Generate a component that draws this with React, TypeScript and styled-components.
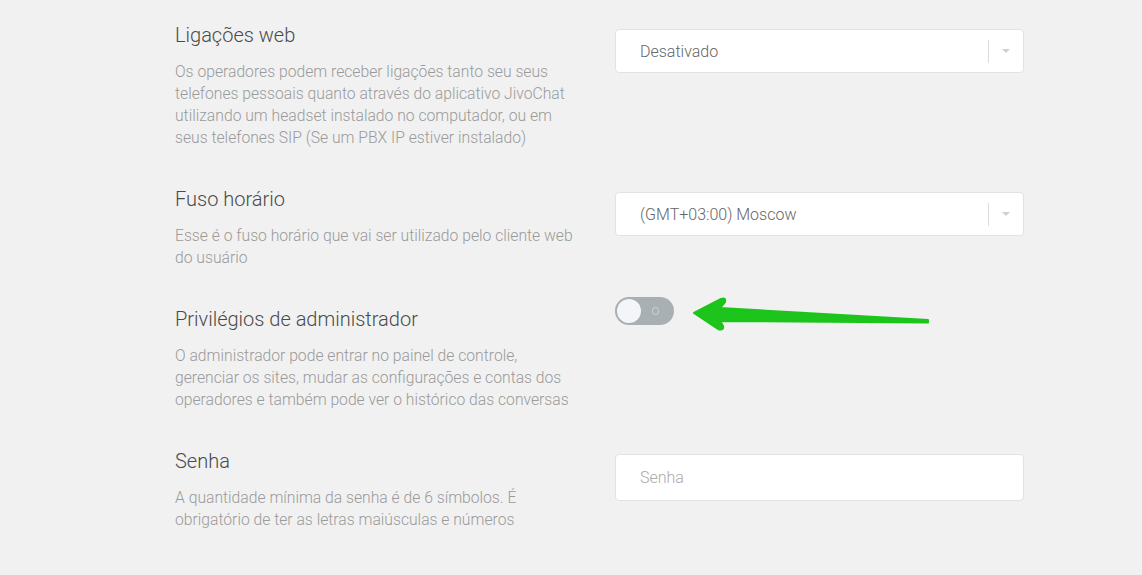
import styled, { createGlobalStyle } from 'styled-components';

const GlobalStyle = createGlobalStyle`
  html, body {
    margin: 0;
    padding: 0;
    background: #f1f1f1;
  }
  body {
    font-family: Roboto, 'Liberation Sans', sans-serif;
  }
`;

const Page = styled.div`
  display: flex;
  flex-direction: column;
  gap: 37px;
  padding: 22px 0 0 175px;
  height: 575px;
  box-sizing: border-box;
  overflow: hidden;
`;

const Row = styled.div`
  display: grid;
  grid-template-columns: 440px 409px;
  align-items: start;
`;

const Info = styled.div`
  display: flex;
  flex-direction: column;
  gap: 13px;
`;

const Title = styled.div`
  font-size: 20px;
  line-height: 26px;
  font-weight: 300;
  color: #4a4a4a;
`;

const Desc = styled.div`
  font-size: 15.7px;
  line-height: 22px;
  font-weight: 300;
  color: #9a9a9a;
  white-space: nowrap;
`;

const Control = styled.div<{ $offset: number }>`
  position: relative;
  margin-top: ${({ $offset }) => $offset}px;
`;

const Box = styled.div<{ $height: number }>`
  display: flex;
  align-items: center;
  height: ${({ $height }) => $height}px;
  box-sizing: border-box;
  padding-left: 24px;
  background: #fff;
  border: 1px solid #e2e2e2;
  border-radius: 4px;
  font-size: 16px;
  font-weight: 300;
`;

const Value = styled.span`
  flex: 1;
  color: #666;
`;

const Placeholder = styled.span`
  flex: 1;
  color: #aaa;
`;

const Separator = styled.span`
  width: 1px;
  height: 23px;
  background: #dcdcdc;
`;

const Caret = styled.span`
  width: 34px;
  display: flex;
  justify-content: center;

  &::after {
    content: '';
    border-left: 4px solid transparent;
    border-right: 4px solid transparent;
    border-top: 4px solid #cfcfcf;
  }
`;

const Toggle = styled.div`
  display: flex;
  align-items: center;
  width: 59px;
  height: 28px;
  box-sizing: border-box;
  padding: 0 2px;
  border-radius: 14px;
  background: #a9b0b3;
`;

const Knob = styled.span`
  width: 24px;
  height: 24px;
  border-radius: 50%;
  background: #f3f5f8;
`;

const OffMark = styled.span`
  width: 5px;
  height: 6px;
  margin-left: 11px;
  border: 1.5px solid #c9cdd0;
  border-radius: 50%;
`;

const Arrow = styled.svg`
  position: absolute;
  left: 76px;
  top: 0;
  overflow: visible;
`;

type Setting = {
  title: string;
  desc: string[];
};

const settings: Setting[] = [
  {
    title: 'Ligações web',
    desc: [
      'Os operadores podem receber ligações tanto seu seus',
      'telefones pessoais quanto através do aplicativo JivoChat',
      'utilizando um headset instalado no computador, ou em',
      'seus telefones SIP (Se um PBX IP estiver instalado)',
    ],
  },
  {
    title: 'Fuso horário',
    desc: ['Esse é o fuso horário que vai ser utilizado pelo cliente web', 'do usuário'],
  },
  {
    title: 'Privilégios de administrador',
    desc: [
      'O administrador pode entrar no painel de controle,',
      'gerenciar os sites, mudar as configurações e contas dos',
      'operadores e também pode ver o histórico das conversas',
    ],
  },
  {
    title: 'Senha',
    desc: ['A quantidade mínima da senha é de 6 símbolos. É', 'obrigatório de ter as letras maiúsculas e números'],
  },
];

const SettingInfo = ({ setting }: { setting: Setting }) => (
  <Info>
    <Title>{setting.title}</Title>
    <Desc>
      {setting.desc.map((line) => (
        <div key={line}>{line}</div>
      ))}
    </Desc>
  </Info>
);

const Select = ({ value }: { value: string }) => (
  <Box $height={44}>
    <Value>{value}</Value>
    <Separator />
    <Caret />
  </Box>
);

export default function App() {
  return (
    <>
      <GlobalStyle />
      <Page>
        <Row>
          <SettingInfo setting={settings[0]} />
          <Control $offset={7}>
            <Select value="Desativado" />
          </Control>
        </Row>

        <Row>
          <SettingInfo setting={settings[1]} />
          <Control $offset={6}>
            <Select value="(GMT+03:00) Moscow" />
          </Control>
        </Row>

        <Row>
          <SettingInfo setting={settings[2]} />
          <Control $offset={-9}>
            <Toggle>
              <Knob />
              <OffMark />
            </Toggle>
            <Arrow width="240" height="40" viewBox="0 0 240 40">
              <path
                d="M3 16 L30 2 Q35 0 34 5 L29 11 L237 23 L237 25.5 L29 24 L32 29 Q33 34 27 32 Z"
                fill="#1cc41c"
                stroke="#1cc41c"
                strokeWidth="2"
                strokeLinejoin="round"
              />
            </Arrow>
          </Control>
        </Row>

        <Row>
          <SettingInfo setting={settings[3]} />
          <Control $offset={6}>
            <Box $height={47}>
              <Placeholder>Senha</Placeholder>
            </Box>
          </Control>
        </Row>
      </Page>
    </>
  );
}
